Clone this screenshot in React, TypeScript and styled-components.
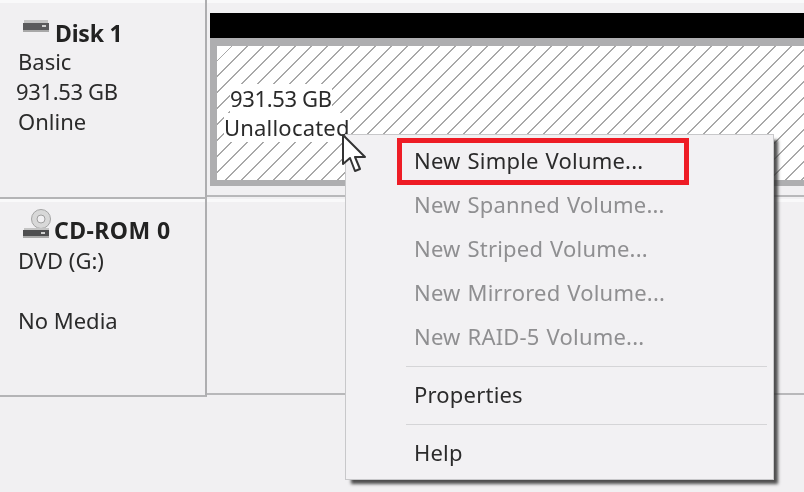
import React from 'react';
import styled, { createGlobalStyle } from 'styled-components';

const GlobalStyle = createGlobalStyle`
  html, body {
    margin: 0;
    background: #f1f0f2;
  }
`;

const Page = styled.div`
  position: relative;
  width: 804px;
  height: 492px;
  overflow: hidden;
  background: #f1f0f2;
  color: #2b2b2b;
  font-family: "Noto Sans", "Open Sans", sans-serif;
  font-size: 22px;
  line-height: 30px;
  filter: blur(0.4px);
`;

const DiskRow = styled.div<{ $height: number }>`
  display: grid;
  grid-template-columns: 207px 1fr;
  height: ${p => p.$height}px;
`;

const DiskInfo = styled.div<{ $top: number }>`
  box-sizing: border-box;
  padding: ${p => p.$top}px 0 0 18px;
  border-right: 2px solid #aeaeb0;
  border-bottom: 2px solid #b4b4b6;
  box-shadow: inset 0 3px 0 #f9f9fa;
`;

const DiskTitle = styled.div`
  display: flex;
  align-items: center;
  gap: 5px;
  margin-left: 5px;
  font-size: 23px;
  font-weight: 700;
  color: #222;
`;

const DiskName = styled.span`
  margin: 2px 0 -2px;
  letter-spacing: -0.2px;
`;

const DriveName = styled.span`
  margin-left: -2px;
  letter-spacing: 0.45px;
`;

const DiskLine = styled.div<{ $shift?: number }>`
  margin-left: ${p => p.$shift || 0}px;
  min-height: 30px;
`;

const SizeText = styled.span`
  letter-spacing: -0.35px;
`;

const DiskArea = styled.div`
  box-sizing: border-box;
  margin-bottom: 2px;
  padding: 13px 0 8px 3px;
  display: flex;
  flex-direction: column;
  border-bottom: 2px solid #b8b8ba;
  box-shadow: inset 0 3px 0 #f9f9fa;
`;

const VolumeHeader = styled.div`
  height: 25px;
  flex: none;
  background: #000;
`;

const VolumeBody = styled.div`
  height: 134px;
  border: solid #aeaeb0;
  border-width: 8px 0 6px 7px;
  background: repeating-linear-gradient(
    135deg,
    #fff 0,
    #fff 9.9px,
    #a8a8a8 9.9px,
    #a8a8a8 11.31px
  );
`;

const VolumeLabel = styled.div`
  padding: 38px 0 0 7px;
  display: flex;
  flex-direction: column;
  align-items: flex-start;
  line-height: 29px;
`;

const VolumeSize = styled.span`
  margin-left: 6px;
  background: #fff;
  letter-spacing: -0.35px;
`;

const VolumeName = styled.span`
  background: #fff;
  letter-spacing: 0.2px;
`;

const ContextMenu = styled.div`
  position: absolute;
  left: 345px;
  top: 134px;
  width: 429px;
  height: 346px;
  box-sizing: border-box;
  padding: 5px 0;
  background: #f2f1f3;
  border: 1px solid #c8c8ca;
  box-shadow: 5px 5px 3px -1px rgba(50, 50, 50, 0.85);
`;

const MenuItem = styled.div<{ $disabled?: boolean }>`
  height: 44px;
  padding-left: 68px;
  line-height: 40px;
  letter-spacing: 0.2px;
  word-spacing: 1px;
  color: ${p => (p.$disabled ? '#8f8f91' : '#2b2b2b')};
`;

const Separator = styled.div`
  height: 1px;
  margin: 6px 6px 7px 60px;
  background: #d5d5d7;
`;

const Highlight = styled.div`
  position: absolute;
  left: 397px;
  top: 138px;
  width: 292px;
  height: 47px;
  box-sizing: border-box;
  border: 5px solid #ee1c25;
`;

const Cursor = styled.svg`
  position: absolute;
  left: 341px;
  top: 133px;
`;

const DiskSvg = styled.svg`
  flex: none;
  align-self: flex-start;
  margin-top: 4px;
`;

const CdSvg = styled.svg`
  flex: none;
  align-self: flex-start;
  margin-top: -6px;
`;

const DiskIcon: React.FC = () => (
  <DiskSvg width="27" height="14" viewBox="0 0 27 14">
    <rect x="1" y="0" width="24" height="3" fill="#c4c4c4" />
    <rect x="0" y="3" width="26" height="7" fill="#5a5a5c" />
    <rect x="19" y="5" width="4" height="2" fill="#d0d0d0" />
    <rect x="0" y="10" width="26" height="2" fill="#a8a8a8" />
  </DiskSvg>
);

const CdIcon: React.FC = () => (
  <CdSvg width="28" height="30" viewBox="0 0 28 30">
    <circle cx="18" cy="10" r="9.5" fill="#d8d8d8" stroke="#a4a4a4" />
    <circle cx="18" cy="10" r="4" fill="#f1f0f2" stroke="#a0a0a0" />
    <rect x="1" y="19" width="25" height="2" fill="#c4c4c4" />
    <rect x="0" y="21" width="26" height="6" fill="#4e4e50" />
    <rect x="18" y="23" width="4" height="2" fill="#d0d0d0" />
    <rect x="0" y="27" width="26" height="2" fill="#a8a8a8" />
  </CdSvg>
);

const App: React.FC = () => (
  <Page>
    <GlobalStyle />
    <DiskRow $height={199}>
      <DiskInfo $top={16}>
        <DiskTitle>
          <DiskIcon />
          <DiskName>Disk 1</DiskName>
        </DiskTitle>
        <DiskLine>Basic</DiskLine>
        <DiskLine $shift={-2}>
          <SizeText>931.53 GB</SizeText>
        </DiskLine>
        <DiskLine>Online</DiskLine>
      </DiskInfo>
      <DiskArea>
        <VolumeHeader />
        <VolumeBody>
          <VolumeLabel>
            <VolumeSize>931.53 GB</VolumeSize>
            <VolumeName>Unallocated</VolumeName>
          </VolumeLabel>
        </VolumeBody>
      </DiskArea>
    </DiskRow>
    <DiskRow $height={198}>
      <DiskInfo $top={16}>
        <DiskTitle>
          <CdIcon />
          <DriveName>CD-ROM 0</DriveName>
        </DiskTitle>
        <DiskLine>DVD (G:)</DiskLine>
        <DiskLine />
        <DiskLine>No Media</DiskLine>
      </DiskInfo>
      <DiskArea />
    </DiskRow>
    <ContextMenu>
      <MenuItem>New Simple Volume...</MenuItem>
      <MenuItem $disabled>New Spanned Volume...</MenuItem>
      <MenuItem $disabled>New Striped Volume...</MenuItem>
      <MenuItem $disabled>New Mirrored Volume...</MenuItem>
      <MenuItem $disabled>New RAID-5 Volume...</MenuItem>
      <Separator />
      <MenuItem>Properties</MenuItem>
      <Separator />
      <MenuItem>Help</MenuItem>
    </ContextMenu>
    <Highlight />
    <Cursor width="28" height="42" viewBox="0 0 28 42">
      <path
        d="M2 2 L2 31 L9 25 L14 38 L19 36 L14 24 L24 24 Z"
        fill="#fff"
        stroke="#333"
        strokeWidth="2"
        strokeLinejoin="round"
      />
    </Cursor>
  </Page>
);

export default App;
